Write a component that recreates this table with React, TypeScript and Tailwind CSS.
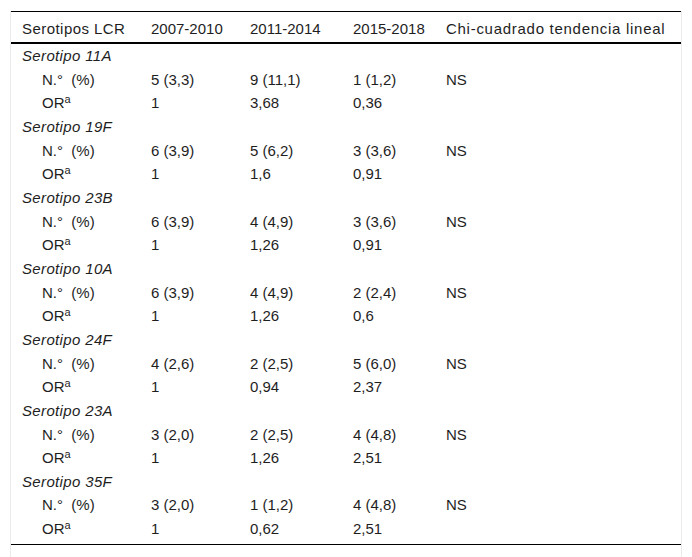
const groups = [
  { name: 'Serotipo 11A', n: ['5 (3,3)', '9 (11,1)', '1 (1,2)'], or: ['1', '3,68', '0,36'] },
  { name: 'Serotipo 19F', n: ['6 (3,9)', '5 (6,2)', '3 (3,6)'], or: ['1', '1,6', '0,91'] },
  { name: 'Serotipo 23B', n: ['6 (3,9)', '4 (4,9)', '3 (3,6)'], or: ['1', '1,26', '0,91'] },
  { name: 'Serotipo 10A', n: ['6 (3,9)', '4 (4,9)', '2 (2,4)'], or: ['1', '1,26', '0,6'] },
  { name: 'Serotipo 24F', n: ['4 (2,6)', '2 (2,5)', '5 (6,0)'], or: ['1', '0,94', '2,37'] },
  { name: 'Serotipo 23A', n: ['3 (2,0)', '2 (2,5)', '4 (4,8)'], or: ['1', '1,26', '2,51'] },
  { name: 'Serotipo 35F', n: ['3 (2,0)', '1 (1,2)', '4 (4,8)'], or: ['1', '0,62', '2,51'] },
];

const headers = [
  { label: 'Serotipos LCR', cls: 'tracking-[0.45px]' },
  { label: '2007-2010', cls: '' },
  { label: '2011-2014', cls: '' },
  { label: '2015-2018', cls: '' },
  { label: 'Chi-cuadrado tendencia lineal', cls: 'tracking-[0.72px]' },
];

export default function App() {
  return (
    <div className="w-[692px] h-[557px] bg-white pl-[10px] pt-[11px] text-[15px] text-[#1e1e1e] font-['Liberation_Sans',Arial,sans-serif]">
      <div className="w-[672px] h-[546px] border-x border-[#ebebeb]">
        <table className="table-fixed border-collapse w-[670px] border-b border-black">
          <colgroup>
            <col className="w-[129px]" />
            <col className="w-[99px]" />
            <col className="w-[103px]" />
            <col className="w-[93px]" />
            <col className="w-[246px]" />
          </colgroup>
          <thead>
            <tr className="border-t border-black border-b-2">
              {headers.map((h) => (
                <th
                  key={h.label}
                  className={`text-left font-normal pl-[11px] pt-[5px] pb-[2px] leading-[23px] whitespace-nowrap ${h.cls}`}
                >
                  {h.label}
                </th>
              ))}
            </tr>
          </thead>
          <tbody>
            {groups.map((g, gi) => (
              <Group key={g.name} g={g} last={gi === groups.length - 1} />
            ))}
          </tbody>
        </table>
      </div>
    </div>
  );
}

function Group({ g, last }: { g: (typeof groups)[number]; last: boolean }) {
  const cell = 'pl-[11px] leading-[23.65px] p-0 whitespace-nowrap';
  const pb = last ? 'pb-[3px]' : '';
  return (
    <>
      <tr>
        <td className={`${cell} italic tracking-[0.35px]`} colSpan={5}>
          {g.name}
        </td>
      </tr>
      <tr>
        <td className={`${cell} pl-[31px]`}>N.°{'\u00a0'} (%)</td>
        {g.n.map((v, i) => (
          <td key={i} className={cell}>
            {v}
          </td>
        ))}
        <td className={cell}>NS</td>
      </tr>
      <tr>
        <td className={`${cell} pl-[31px] ${pb}`}>
          OR<sup className="text-[11px]">a</sup>
        </td>
        {g.or.map((v, i) => (
          <td key={i} className={`${cell} ${pb}`}>
            {v}
          </td>
        ))}
        <td className={cell}></td>
      </tr>
    </>
  );
}
